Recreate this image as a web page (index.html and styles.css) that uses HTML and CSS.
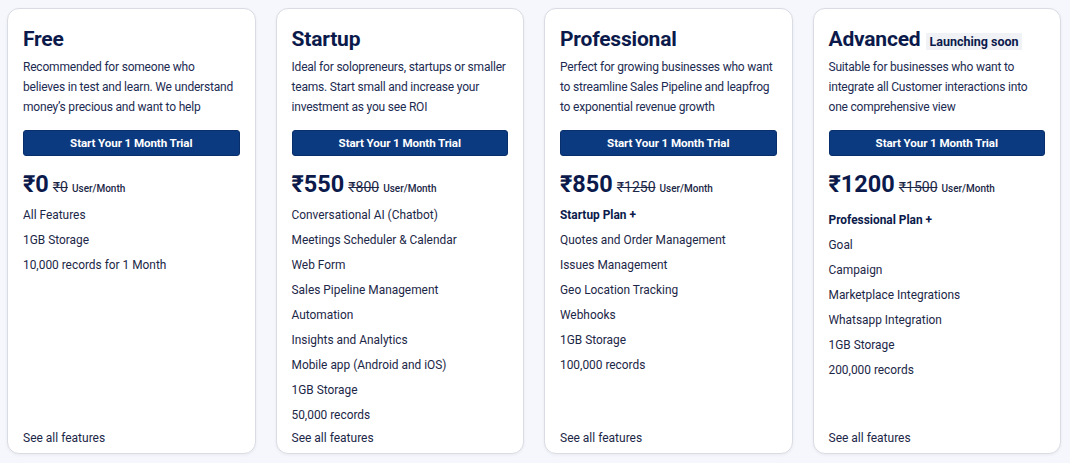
FILE: index.html
```html
<!DOCTYPE html>
<html lang="en">
<head>
<meta charset="utf-8">
<title>Pricing</title>
<link rel="stylesheet" href="styles.css">
</head>
<body>
<div class="plans">
  <div class="card">
    <h2 class="title">Free</h2>
    <p class="desc">Recommended for someone who believes in test and learn. We understand money’s precious and want to help</p>
    <button class="cta">Start Your 1 Month Trial</button>
    <div class="price"><span class="now">₹0</span><span class="was">₹0</span><span class="unit">User/Month</span></div>
    <ul class="features">
      <li>All Features</li>
      <li>1GB Storage</li>
      <li>10,000 records for 1 Month</li>
    </ul>
    <a class="more">See all features</a>
  </div>
  <div class="card">
    <h2 class="title">Startup</h2>
    <p class="desc">Ideal for solopreneurs, startups or smaller teams. Start small and increase your investment as you see ROI</p>
    <button class="cta">Start Your 1 Month Trial</button>
    <div class="price"><span class="now">₹550</span><span class="was">₹800</span><span class="unit">User/Month</span></div>
    <ul class="features">
      <li>Conversational AI (Chatbot)</li>
      <li>Meetings Scheduler &amp; Calendar</li>
      <li>Web Form</li>
      <li>Sales Pipeline Management</li>
      <li>Automation</li>
      <li>Insights and Analytics</li>
      <li>Mobile app (Android and iOS)</li>
      <li>1GB Storage</li>
      <li>50,000 records</li>
    </ul>
    <a class="more">See all features</a>
  </div>
  <div class="card">
    <h2 class="title">Professional</h2>
    <p class="desc">Perfect for growing businesses who want to streamline Sales Pipeline and leapfrog to exponential revenue growth</p>
    <button class="cta">Start Your 1 Month Trial</button>
    <div class="price"><span class="now">₹850</span><span class="was">₹1250</span><span class="unit">User/Month</span></div>
    <ul class="features">
      <li class="base">Startup Plan +</li>
      <li>Quotes and Order Management</li>
      <li>Issues Management</li>
      <li>Geo Location Tracking</li>
      <li>Webhooks</li>
      <li>1GB Storage</li>
      <li>100,000 records</li>
    </ul>
    <a class="more">See all features</a>
  </div>
  <div class="card">
    <h2 class="title">Advanced <span class="badge">Launching soon</span></h2>
    <p class="desc">Suitable for businesses who want to integrate all Customer interactions into one comprehensive view</p>
    <button class="cta">Start Your 1 Month Trial</button>
    <div class="price"><span class="now">₹1200</span><span class="was">₹1500</span><span class="unit">User/Month</span></div>
    <ul class="features features-shift">
      <li class="base">Professional Plan +</li>
      <li>Goal</li>
      <li>Campaign</li>
      <li>Marketplace Integrations</li>
      <li>Whatsapp Integration</li>
      <li>1GB Storage</li>
      <li>200,000 records</li>
    </ul>
    <a class="more">See all features</a>
  </div>
</div>
</body>
</html>
```

FILE: styles.css
```css
* { box-sizing: border-box; }
html, body { margin: 0; padding: 0; }
body {
  background: #f6f7fc;
  font-family: Roboto, "Liberation Sans", sans-serif;
  color: #1c2747;
}
.plans {
  display: grid;
  grid-template-columns: repeat(4, 1fr);
  gap: 20px;
  padding: 8px 9px 9px 7px;
  height: 463px;
}
.card {
  background: #fff;
  border: 1px solid #d9dce3;
  border-radius: 12px;
  box-shadow: 0 1px 3px rgba(20, 30, 60, 0.06);
  padding: 17px 15px 6px 15px;
  display: flex;
  flex-direction: column;
  min-height: 0;
}
.card > * { flex-shrink: 0; }
.title {
  margin: 0;
  font-size: 21px;
  line-height: 26px;
  font-weight: 700;
  color: #0b1a4b;
  letter-spacing: -0.2px;
  display: flex;
  align-items: center;
}
.badge {
  margin-left: 6px;
  margin-top: 5px;
  background: #f1f2f6;
  font-size: 12.5px;
  line-height: 17px;
  padding: 0 3px;
  font-weight: 700;
  color: #0b1a4b;
  letter-spacing: 0;
}
.desc {
  margin: 5px 1.5px 0 0;
  font-size: 12px;
  letter-spacing: -0.2px;
  line-height: 20px;
  color: #1c2b52;
}
.cta {
  margin-top: 13px;
  height: 26px;
  width: 100%;
  border: 1px solid #082f6b;
  border-radius: 3px;
  background: #0b3a80;
  color: #fff;
  font-family: inherit;
  font-size: 11.6px;
  font-weight: 700;
  letter-spacing: -0.1px;
  cursor: pointer;
}
.price {
  margin-top: 14px;
  height: 28px;
  display: flex;
  align-items: baseline;
  gap: 4px;
  color: #0b1a4b;
}
.now {
  font-size: 23.5px;
  line-height: 28px;
  font-weight: 700;
}
.was {
  font-size: 14px;
  text-decoration: line-through;
  color: #1c2747;
}
.unit {
  font-size: 10px;
  font-weight: 500;
  color: #1c2747;
}
.features {
  list-style: none;
  margin: 5px 0 0;
  padding: 0;
  font-size: 11.9px;
  line-height: 25px;
  color: #1c2747;
}
.features-shift { margin-top: 10px; }
.features .base {
  font-weight: 700;
  color: #0b1a4b;
}
.more {
  margin-top: auto;
  font-size: 12px;
  line-height: 18px;
  color: #1c2747;
  cursor: pointer;
}
```
